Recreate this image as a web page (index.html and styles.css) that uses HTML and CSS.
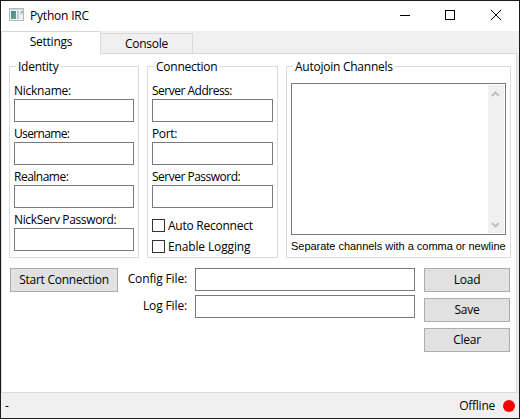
FILE: index.html
```html
<!DOCTYPE html>
<html lang="en">
<head>
<meta charset="utf-8">
<title>Python IRC</title>
<link rel="stylesheet" href="styles.css">
</head>
<body>
<div class="window">
  <header class="titlebar">
    <svg class="app-icon" width="15" height="13" viewBox="0 0 15 13" shape-rendering="crispEdges">
      <defs><linearGradient id="g" x1="0" y1="0" x2="0.5" y2="1"><stop offset="0" stop-color="#4c7fa5"/><stop offset="1" stop-color="#58a884"/></linearGradient></defs>
      <rect x="0.5" y="0.5" width="14" height="12" fill="#eef2f3" stroke="#b4b9bd"/>
      <rect x="1" y="1" width="13" height="1" fill="#cbd1d7"/>
      <rect x="2" y="3" width="5" height="8" fill="url(#g)"/>
      <rect x="8" y="3" width="2" height="8" fill="#b9cbd6"/>
      <rect x="11" y="3" width="3" height="4" fill="#cfe3d2"/>
      <rect x="12" y="3" width="2" height="2" fill="#8fbfa0"/>
    </svg>
    <span class="title">Python IRC</span>
    <svg class="controls" width="104" height="12" viewBox="0 0 104 12" fill="none" stroke="#000">
      <path d="M0 5.5h10M45.5 0.5h9v9h-9z" shape-rendering="crispEdges"/>
      <path d="M91 0l10 10M101 0l-10 10"/>
    </svg>
  </header>
  <nav class="tabs">
    <div class="tab active">Settings</div>
    <div class="tab">Console</div>
    <div class="rest"></div>
  </nav>
  <main class="pane">
    <div class="groups">
      <section class="group identity">
        <h2>Identity</h2>
        <label>Nickname:</label><input type="text">
        <label class="tightest">Username:</label><input type="text">
        <label class="tight">Realname:</label><input type="text">
        <label class="snug">NickServ Password:</label><input type="text">
      </section>
      <section class="group connection">
        <h2>Connection</h2>
        <label class="tight">Server Address:</label><input type="text">
        <label class="snug">Port:</label><input type="text">
        <label class="tight">Server Password:</label><input type="text">
        <div class="checks">
          <div class="check"><i></i><span>Auto Reconnect</span></div>
          <div class="check"><i></i><span class="wide">Enable Logging</span></div>
        </div>
      </section>
      <section class="group channels">
        <h2>Autojoin Channels</h2>
        <div class="area">
          <div class="scroll">
            <svg width="16" height="16" viewBox="0 0 16 16"><path d="M4 11L7.5 7.5 11 11" fill="none" stroke="#bfbfbf" stroke-width="2"/></svg>
            <svg width="16" height="16" viewBox="0 0 16 16"><path d="M4 6L7.5 9.5 11 6" fill="none" stroke="#bfbfbf" stroke-width="2"/></svg>
          </div>
        </div>
        <p class="hint">Separate channels with a comma or newline</p>
      </section>
    </div>
    <div class="actions">
      <button class="start">Start Connection</button>
      <div class="files">
        <label class="wide">Config File:</label><input type="text">
        <label class="wide">Log File:</label><input type="text">
      </div>
      <div class="buttons"><button>Load</button><button>Save</button><button>Clear</button></div>
    </div>
  </main>
  <footer class="status"><span>-</span><span class="state">Offline</span><i class="dot"></i></footer>
</div>
</body>
</html>
```
FILE: styles.css
```css
* { box-sizing: border-box; }
body {
  margin: 0;
  font: 12px/16px "Open Sans", "Noto Sans", sans-serif;
  letter-spacing: -0.25px;
  color: #000;
  white-space: nowrap;
}
.window {
  width: 520px;
  height: 419px;
  border: 1px solid #1b1a1c;
  background: #f0f0f0;
  display: flex;
  flex-direction: column;
}
.titlebar {
  height: 30px;
  background: #fff;
  display: flex;
  align-items: center;
  padding: 0 15px 0 8px;
}
.app-icon { margin-bottom: 3px; }
.title { margin-left: 6px; letter-spacing: -0.2px; }
.controls { margin-left: auto; }
.tabs { height: 23px; display: flex; align-items: flex-end; }
.tab {
  width: 92px;
  height: 21px;
  border: 1px solid #d9d9d9;
  border-left: 0;
  text-align: center;
  line-height: 20px;
}
.tab.active {
  width: 100px;
  height: 23px;
  border-left: 1px solid #d9d9d9;
  border-bottom: 0;
  background: #fff;
}
.rest { width: 324px; height: 1px; background: #d9d9d9; }
.pane {
  width: 516px;
  height: 339px;
  border: 1px solid #d9d9d9;
  border-top: 0;
  background: #fff;
  padding: 12px 5px 0 7px;
}
.groups { display: flex; height: 192px; }
.group { border: 1px solid #dcdcdc; padding: 0 4px; }
.identity { width: 130px; margin-right: 8px; }
.connection { width: 131px; margin-right: 8px; }
.channels { width: 225px; }
h2 {
  font: inherit;
  width: fit-content;
  height: 16px;
  margin: -8px 0 7px 2px;
  padding: 0 2px;
  background: #fff;
}
.group label { display: block; height: 17px; line-height: 17px; }
.group .snug { letter-spacing: -0.35px; }
.group .tight { letter-spacing: -0.5px; }
.group .tightest { letter-spacing: -0.65px; }
.wide { letter-spacing: -0.14px; }
input {
  display: block;
  width: 100%;
  height: 23px;
  margin: 0 0 3px;
  padding: 0;
  border: 1px solid #7a7a7a;
  border-radius: 0;
  background: #fff;
}
.checks { padding-top: 8px; }
.check { display: flex; height: 21px; }
.check i { width: 13px; height: 13px; border: 1px solid #333; margin-right: 3px; }
.check span { line-height: 14px; }
.area {
  height: 152px;
  border: 1px solid #7a7a7a;
  padding: 1px;
  display: flex;
  justify-content: flex-end;
  margin-top: 8px;
}
.channels h2 { margin-bottom: 0; }
.scroll {
  width: 16px;
  background: #f0f0f0;
  display: flex;
  flex-direction: column;
  justify-content: space-between;
}
.hint { margin: 3px 0 0; font: 11px/16px "Liberation Sans", Arial, sans-serif; letter-spacing: -0.03px; }
.actions { display: flex; padding: 10px 0 0 1px; }
button {
  display: block;
  padding: 0;
  width: 86px;
  height: 24px;
  border: 1px solid #adadad;
  border-radius: 0;
  background: #e1e1e1;
  color: #000;
  font: inherit;
  letter-spacing: inherit;
}
.start { width: 108px; }
.files {
  width: 297px;
  display: grid;
  grid-template-columns: 69px 220px;
  column-gap: 8px;
  row-gap: 4px;
  align-content: start;
}
.files input { margin: 0; }
.files label { text-align: right; line-height: 22px; height: 23px; }
.buttons { margin-left: 9px; display: grid; row-gap: 6px; }
.status { flex: 1; display: flex; align-items: center; padding: 1px 4px 0; }
.state { margin-left: auto; margin-right: 8px; }
.dot { width: 12px; height: 12px; border-radius: 50%; background: #f00; }
```
